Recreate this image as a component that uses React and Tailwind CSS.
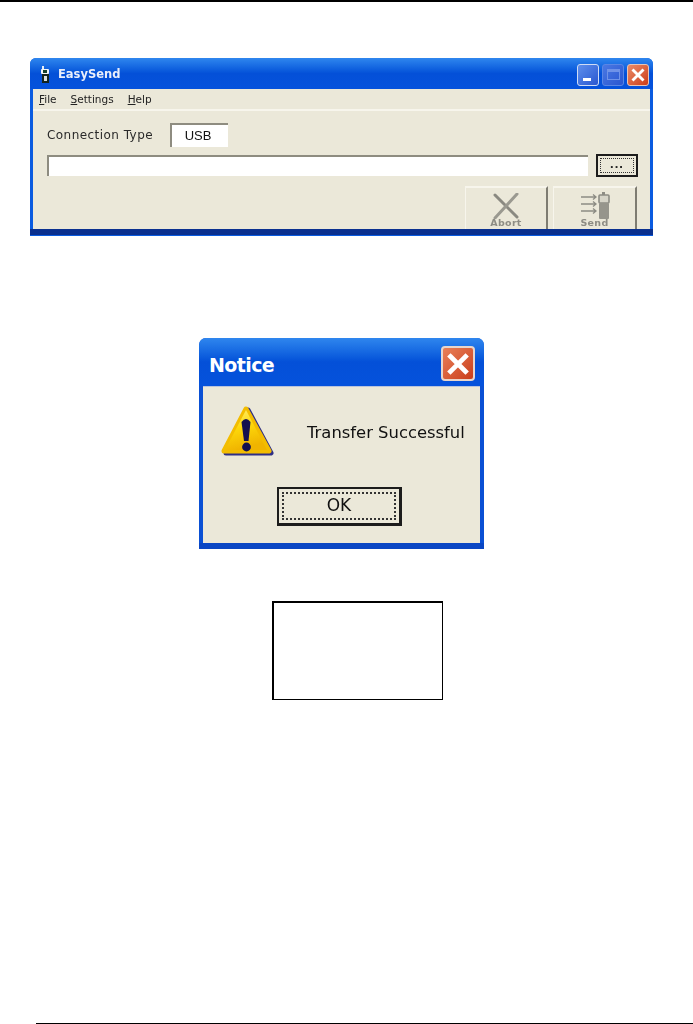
import React from "react";

const Close = ({ size, className }) => (
  <svg width={size} height={size} viewBox="0 0 24 24" className={className}>
    <path d="M6 6 L18 18 M18 6 L6 18" stroke="#fff" strokeWidth="3.8" strokeLinecap="square" />
  </svg>
);

const PhoneIcon = () => (
  <svg width="9" height="18" viewBox="0 0 9 18">
    <rect x="1" y="0" width="2" height="4" fill="#e8eef4" />
    <rect x="0" y="3" width="8" height="5" rx="1" fill="#f2f5f5" />
    <rect x="2" y="4" width="4" height="3" fill="#14402c" />
    <rect x="1" y="8" width="7" height="9" fill="#14241d" />
    <rect x="3" y="10" width="3" height="5" fill="#d6dde0" />
  </svg>
);

const AbortIcon = () => (
  <svg width="28" height="26" viewBox="0 0 28 26">
    <path d="M3 2 L25 24" stroke="#8a8981" strokeWidth="3" strokeLinecap="round" />
    <path d="M25 1 L3 25" stroke="#9a9990" strokeWidth="3" strokeLinecap="round" />
  </svg>
);

const SendIcon = () => (
  <svg width="30" height="27" viewBox="0 0 30 27">
    <g stroke="#8d8c84" strokeWidth="1.3" fill="none">
      <path d="M1 5 H16 M13 2.5 L16 5 L13 7.5" />
      <path d="M1 12 H16 M13 9.5 L16 12 L13 14.5" />
      <path d="M1 19 H16 M13 16.5 L16 19 L13 21.5" />
    </g>
    <rect x="22" y="0" width="3" height="4" fill="#8d8c84" />
    <rect x="19" y="3" width="10" height="8" rx="1" fill="#d6d4c8" stroke="#8d8c84" strokeWidth="1.6" />
    <rect x="19" y="11" width="10" height="16" rx="1" fill="#96958c" />
  </svg>
);

const WarningIcon = () => (
  <svg width="54" height="54" viewBox="0 0 54 54">
    <defs>
      <linearGradient id="w" x1="0" y1="0" x2="0.3" y2="1">
        <stop offset="0" stopColor="#fff07a" />
        <stop offset="0.5" stopColor="#fdd80a" />
        <stop offset="1" stopColor="#f0b400" />
      </linearGradient>
    </defs>
    <path d="M27 5 L50 48 L5 48 Z" fill="#2e2f86" stroke="#2e2f86" strokeWidth="5" strokeLinejoin="round" />
    <path d="M25 4 L48 46 L3 46 Z" fill="#fdd80a" stroke="#f3bd00" strokeWidth="5" strokeLinejoin="round" />
    <path d="M25 5 L46 45 L4 45 Z" fill="url(#w)" />
    <path d="M20.5 17 Q25 11 29.5 17 L27.5 36 L23 36 Z" fill="#14104f" />
    <circle cx="25.5" cy="42" r="4.4" fill="#14104f" />
  </svg>
);

const u = (c) => <span className="underline">{c}</span>;

export default function App() {
  return (
    <div className="relative flex h-[1024px] w-[693px] flex-col overflow-hidden bg-white">
      <div className="h-[2px] w-full shrink-0 bg-black" />

      <div
        className="ml-[30px] mt-[56px] flex h-[178px] w-[623px] shrink-0 flex-col rounded-t-[6px] bg-[#0a5be0] blur-[0.4px]"
        style={{ fontFamily: '"Liberation Sans", Arial, sans-serif' }}
      >
        <div className="flex h-[31px] shrink-0 items-center rounded-t-[6px] bg-gradient-to-b from-[#2f86ee] via-[#0450d8] to-[#0552dc] pl-[11px] pr-[4px] pt-[2px]">
          <PhoneIcon />
          <span
            className="ml-[8px] text-[11.5px] font-bold text-[#e9eefb]"
            style={{ fontFamily: '"DejaVu Sans", sans-serif' }}
          >
            EasySend
          </span>
          <div className="ml-auto flex gap-[3px]">
            <div className="flex h-[22px] w-[22px] items-end rounded-[3px] border border-[#cfdcf5] bg-gradient-to-br from-[#5f8fec] to-[#2a56d0] pb-[4px] pl-[5px]">
              <div className="h-[3px] w-[8px] bg-white" />
            </div>
            <div className="flex h-[22px] w-[22px] items-center justify-center rounded-[3px] border border-[#5a86e4] bg-gradient-to-br from-[#4a78e4] to-[#2a56d0]">
              <div className="h-[11px] w-[13px] border border-t-[3px] border-[#6f92e8]" />
            </div>
            <div className="flex h-[22px] w-[22px] items-center justify-center rounded-[3px] border border-[#e6c4b6] bg-gradient-to-br from-[#ea8a66] to-[#cb3a14]">
              <Close size={18} />
            </div>
          </div>
        </div>

        <div className="mx-[3px] flex h-[140px] shrink-0 flex-col overflow-hidden bg-[#ebe8d9]">
          <div
            className="flex h-[20px] shrink-0 items-center gap-[14px] pl-[6px] pt-[1px] text-[10.5px] text-[#222]"
            style={{ fontFamily: '"DejaVu Sans", sans-serif' }}
          >
            <span>{u("F")}ile</span>
            <span>{u("S")}ettings</span>
            <span>{u("H")}elp</span>
          </div>
          <div className="h-[2px] shrink-0 bg-[#f7f5ec]" />

          <div className="ml-[14px] mt-[12px] flex h-[24px] shrink-0 items-center">
            <span
              className="w-[123px] text-[12px] tracking-[0.45px] text-[#2a2a2a]"
              style={{ fontFamily: '"DejaVu Sans", sans-serif' }}
            >
              Connection Type
            </span>
            <div className="flex h-[24px] w-[58px] items-center justify-center border-l-2 border-t-2 border-[#8e8c80] bg-white pb-[1px] pr-[4px] text-[13px] text-[#111]">
              USB
            </div>
          </div>

          <div className="ml-[14px] mt-[7px] flex h-[24px] shrink-0">
            <div className="mt-[1px] h-[21px] w-[541px] border-l-2 border-t-2 border-[#8e8c80] bg-white" />
            <div className="ml-[8px] flex h-[23px] w-[42px] items-center justify-center border-2 border-[#1c1c1c] bg-[#ebe8d9] p-[2px]">
              <div className="flex h-full w-full items-end justify-center border border-dotted border-[#333] pb-[2px] text-[13px] font-bold leading-none tracking-[1px] text-[#222]">
                ...
              </div>
            </div>
          </div>

          <div className="ml-[432px] mt-[8px] flex shrink-0 gap-[5px]">
            <div className="flex h-[43px] w-[83px] flex-col items-center border-r-2 border-t-2 border-l border-r-[#7e7c72] border-t-[#f7f5ec] border-l-[#f7f5ec] pt-[5px]">
              <AbortIcon />
              <span className="mt-[-1px] text-[9.5px] font-bold leading-none tracking-[0.3px] text-[#8d8c84]" style={{ fontFamily: '"DejaVu Sans", sans-serif' }}>Abort</span>
            </div>
            <div className="flex h-[43px] w-[84px] flex-col items-center border-r-2 border-t-2 border-l border-r-[#7e7c72] border-t-[#f7f5ec] border-l-[#f7f5ec] pt-[4px]">
              <SendIcon />
              <span className="mt-[-1px] text-[9.5px] font-bold leading-none tracking-[0.3px] text-[#8d8c84]" style={{ fontFamily: '"DejaVu Sans", sans-serif' }}>Send</span>
            </div>
          </div>
        </div>

        <div className="h-[6px] shrink-0 bg-[#0a308f]" />
      </div>

      <div
        className="ml-[199px] mt-[102px] flex h-[211px] w-[285px] shrink-0 flex-col rounded-t-[7px] bg-[#0a50d4] blur-[0.4px]"
        style={{ fontFamily: '"DejaVu Sans", sans-serif' }}
      >
        <div className="flex h-[48px] shrink-0 items-center justify-between rounded-t-[7px] bg-gradient-to-b from-[#2f86ee] via-[#0450d8] to-[#0552dc] pl-[10px] pr-[9px]">
          <span className="pt-[6px] text-[19px] font-bold tracking-[-0.6px] text-white">Notice</span>
          <div className="mt-[3px] flex h-[35px] w-[34px] items-center justify-center rounded-[4px] border-2 border-[#e8d6cc] bg-gradient-to-br from-[#e98058] to-[#c93c18]">
            <Close size={30} />
          </div>
        </div>
        <div className="mx-[4px] flex h-[157px] shrink-0 flex-col border-t border-[#b9c4dc] bg-[#ebe8d9]">
          <div className="flex h-[100px] shrink-0 items-start">
            <div className="ml-[18px] mt-[18px]">
              <WarningIcon />
            </div>
            <span className="ml-[32px] mt-[34px] text-[16.4px] leading-[24px] text-[#111]">Transfer Successful</span>
          </div>
          <div className="ml-[74px] flex h-[39px] w-[125px] items-center justify-center border-2 border-b-[3px] border-r-[3px] border-[#1c1c1c] bg-[#ebe8d9] p-[3px]">
            <div className="flex h-full w-full items-center justify-center border-2 border-dotted border-[#333] text-[17px] text-[#111]">
              OK
            </div>
          </div>
        </div>
        <div className="h-[6px] shrink-0 bg-[#0a46c4]" />
      </div>

      <div className="ml-[272px] mt-[52px] h-[99px] w-[171px] shrink-0 border border-l-2 border-t-2 border-black bg-white" />

      <div className="ml-[36px] mt-auto h-[1px] shrink-0 bg-black" />
    </div>
  );
}
